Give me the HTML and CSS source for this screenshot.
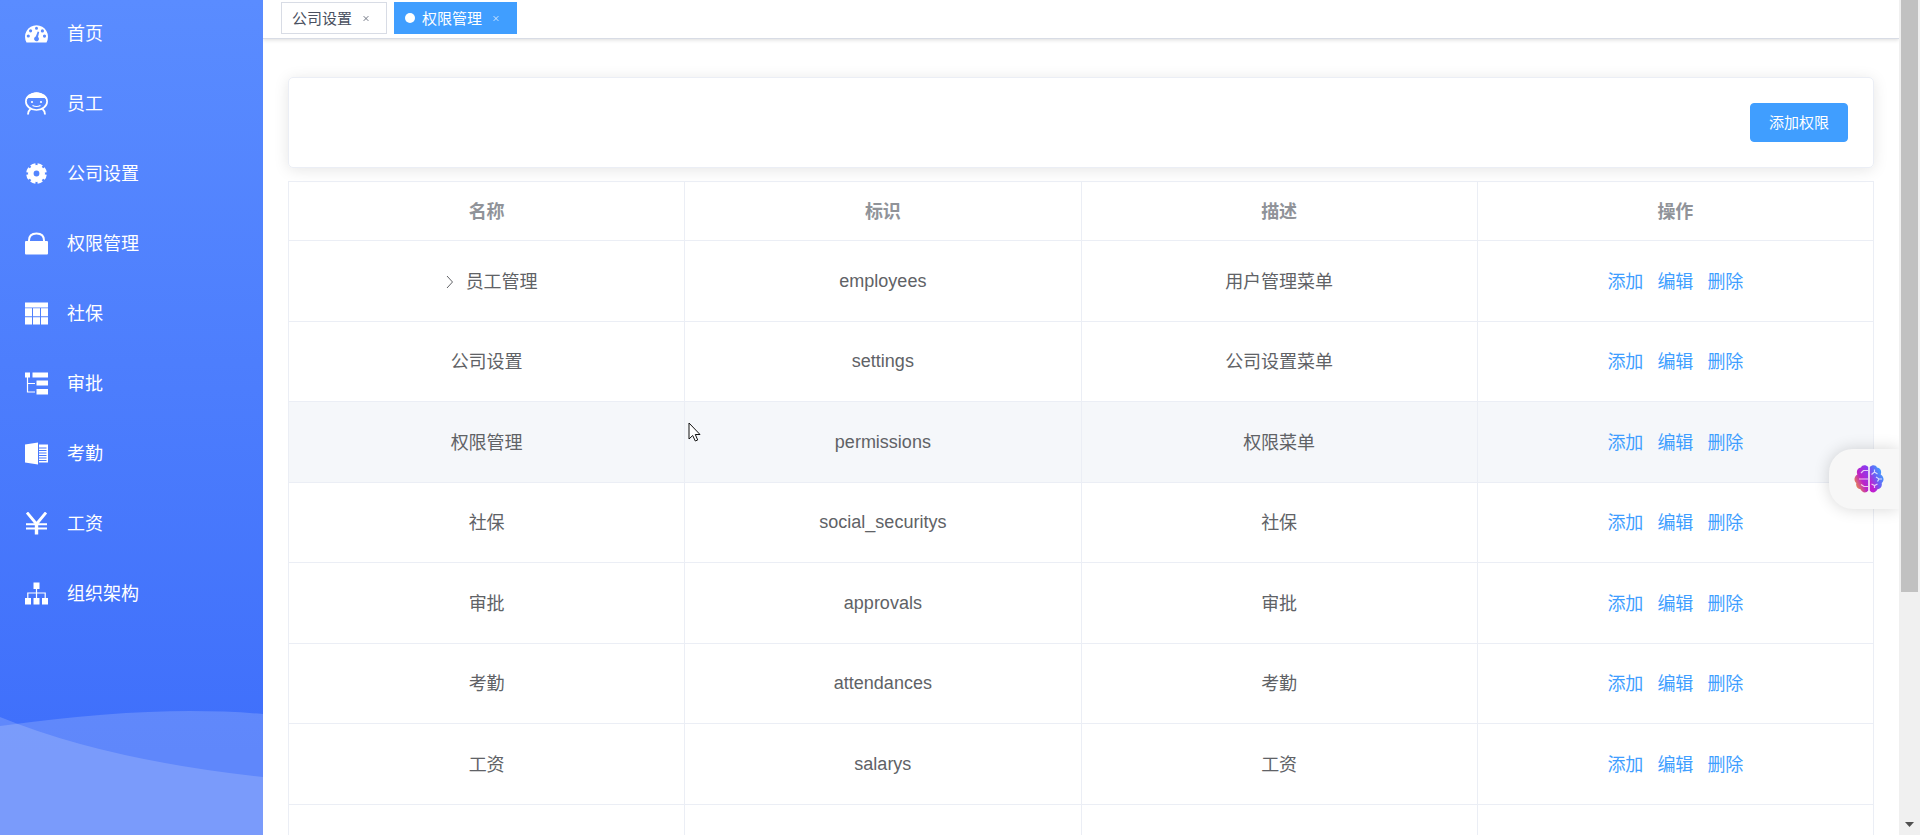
FILE: index.html
```
<!DOCTYPE html>
<html lang="zh-CN">
<head>
<meta charset="utf-8">
<title>权限管理</title>
<link rel="stylesheet" href="styles.css">
</head>
<body>
<div class="app">
  <nav class="sidebar">
    <ul class="menu">
      <li><a class="menu-item" href="#"><svg class="icon" viewBox="0 0 23 23"><path fill="currentColor" fill-rule="evenodd" d="M1.500 20.500A11.500 11.500 0 1 1 21.500 20.500ZM1.700 14a1.600 1.600 0 1 0 3.200 0a1.600 1.600 0 1 0-3.200 0ZM4 8.800a1.600 1.600 0 1 0 3.200 0a1.600 1.600 0 1 0-3.200 0ZM11.500 4.800a1.500 1.500 0 1 0 0 3a1.500 1.500 0 1 0 0-3ZM17.400 7.300a1.600 1.600 0 1 0 0 3.200a1.600 1.600 0 1 0 0-3.200ZM19.500 12.500a1.600 1.600 0 1 0 0 3.200a1.600 1.600 0 1 0 0-3.200ZM12.700 9.500 10.800 14.600a2.400 2.400 0 1 0 2.200.4L14.200 9.900Z"/></svg><span>首页</span></a></li>
      <li><a class="menu-item" href="#"><svg class="icon" viewBox="0 0 23 23"><ellipse cx="11.500" cy="9.500" rx="10.600" ry="8.500" fill="none" stroke="currentColor" stroke-width="1.700"/><path fill="currentColor" d="M1 7.500C3 2.500 7 .500 11.500 .500S20 2.500 22 7.500L19.500 6H3.500Z"/><circle cx="7" cy="10" r="1.100" fill="currentColor"/><circle cx="16" cy="10" r="1.100" fill="currentColor"/><path fill="none" stroke="currentColor" stroke-width="1.200" d="M7.500 13.500q4 2 8 0"/><path fill="none" stroke="currentColor" stroke-width="1.900" d="M5.500 17Q3 19 3 22.500M17.500 17Q20 19 20 22.500"/></svg><span>员工</span></a></li>
      <li><a class="menu-item" href="#"><svg class="icon" viewBox="0 0 23 23"><g fill="none" stroke="currentColor"><circle cx="11.500" cy="11.500" r="5.700" stroke-width="5.600"/><circle cx="11.500" cy="11.500" r="8.800" stroke-width="3" pathLength="80" stroke-dasharray="7 3" stroke-dashoffset="-1.500"/></g></svg><span>公司设置</span></a></li>
      <li><a class="menu-item" href="#"><svg class="icon" viewBox="0 0 23 23"><rect y="9" width="23" height="13.500" rx="1" fill="currentColor"/><path fill="none" stroke="currentColor" stroke-width="2" d="M4 10V8.500C4 4 7 1.500 11.500 1.500S19 4 19 8.500V10"/></svg><span>权限管理</span></a></li>
      <li><a class="menu-item" href="#"><svg class="icon" viewBox="0 0 23 23"><path fill="currentColor" d="M0 .500h23v5H0zM0 6.300h7v8H0zM8 6.300h7v8H8zM16 6.300h7v8h-7zM0 15.200h7v7.300H0zM8 15.200h7v7.300H8zM16 15.200h7v7.300h-7z"/></svg><span>社保</span></a></li>
      <li><a class="menu-item" href="#"><svg class="icon" viewBox="0 0 23 23"><path fill="currentColor" d="M0 .500h5v5H0zM7.500 .500H23v5H7.500zM11.500 8.500H23v5H11.500zM11.500 17H23v5.500H11.500z"/><path fill="none" stroke="currentColor" stroke-width="1.200" d="M2.500 5V20H10M2.500 11.500H10"/></svg><span>审批</span></a></li>
      <li><a class="menu-item" href="#"><svg class="icon" viewBox="0 0 23 23"><path fill="currentColor" d="M0 2.500 13 .500v22L0 20.500zM14 2.500h9v18h-9v-1.500h7.500v-1H14v-1.500h7.500v-1H14V14h7.500v-1H14v-1.500h7.500v-1H14V9h7.500V8H14V6.500h7.500v-1H14z"/></svg><span>考勤</span></a></li>
      <li><a class="menu-item" href="#"><svg class="icon" viewBox="0 0 23 23"><path fill="none" stroke="currentColor" stroke-width="2.800" d="M2 .500 11.500 12 21 .500"/><path fill="none" stroke="currentColor" stroke-width="3.400" d="M11.500 11V22.500"/><path fill="none" stroke="currentColor" stroke-width="2" d="M1 12.300H22M1 16.600H22"/></svg><span>工资</span></a></li>
      <li><a class="menu-item" href="#"><svg class="icon" viewBox="0 0 23 23"><path fill="currentColor" d="M8.500 .500h6v6.500h-6zM0 16h6v6.500H0zM8.500 16h6v6.500h-6zM17 16h6v6.500h-6z"/><path fill="none" stroke="currentColor" stroke-width="1.200" d="M11.500 6V16M2.800 16V11H20.200V16"/></svg><span>组织架构</span></a></li>
    </ul>
    <svg class="waves" viewBox="0 0 263 125" preserveAspectRatio="none" aria-hidden="true"><path d="M0 16Q110 1 190 1Q230 1 263 4V125H0Z" fill="#fff" fill-opacity=".17"/><path d="M0 7Q105 50 263 67V125H0Z" fill="#fff" fill-opacity=".17"/></svg>
  </nav>

  <div class="main">
    <div class="tags">
      <a class="tag" href="#"><span>公司设置</span><svg class="close" viewBox="0 0 20 20"><path d="M7.500 7.500l5 5M12.500 7.500l-5 5"/></svg></a>
      <a class="tag tag-active" href="#"><i class="dot"></i><span>权限管理</span><svg class="close" viewBox="0 0 20 20"><path d="M7.500 7.500l5 5M12.500 7.500l-5 5"/></svg></a>
    </div>
    <main class="content">
      <section class="card"><button class="btn" type="button">添加权限</button></section>
      <table class="grid">
        <thead><tr><th>名称</th><th>标识</th><th>描述</th><th>操作</th></tr></thead>
        <tbody>
          <tr><td><svg class="arrow" viewBox="0 0 12 12"><path d="M3 0l5.500 6L3 12"/></svg>员工管理</td><td class="code">employees</td><td>用户管理菜单</td><td><a class="link" href="#">添加</a><a class="link" href="#">编辑</a><a class="link" href="#">删除</a></td></tr>
          <tr><td>公司设置</td><td class="code">settings</td><td>公司设置菜单</td><td><a class="link" href="#">添加</a><a class="link" href="#">编辑</a><a class="link" href="#">删除</a></td></tr>
          <tr class="hovered"><td>权限管理</td><td class="code">permissions</td><td>权限菜单</td><td><a class="link" href="#">添加</a><a class="link" href="#">编辑</a><a class="link" href="#">删除</a></td></tr>
          <tr><td>社保</td><td class="code">social_securitys</td><td>社保</td><td><a class="link" href="#">添加</a><a class="link" href="#">编辑</a><a class="link" href="#">删除</a></td></tr>
          <tr><td>审批</td><td class="code">approvals</td><td>审批</td><td><a class="link" href="#">添加</a><a class="link" href="#">编辑</a><a class="link" href="#">删除</a></td></tr>
          <tr><td>考勤</td><td class="code">attendances</td><td>考勤</td><td><a class="link" href="#">添加</a><a class="link" href="#">编辑</a><a class="link" href="#">删除</a></td></tr>
          <tr><td>工资</td><td class="code">salarys</td><td>工资</td><td><a class="link" href="#">添加</a><a class="link" href="#">编辑</a><a class="link" href="#">删除</a></td></tr>
          <tr><td>组织架构</td><td class="code"></td><td>组织架构</td><td></td></tr>
        </tbody>
      </table>
    </main>
  </div>

  <div class="scrollbar"><div class="thumb"></div><svg class="scroll-down" viewBox="0 0 9 5"><path d="M0 0h9L4.500 5z" fill="#505050"/></svg></div>
</div>

<button class="assistant" type="button" aria-label="助手">
  <svg class="brain" viewBox="0 0 30 28">
    <defs>
      <linearGradient id="left" x1="1" y1="0" x2="0" y2="1"><stop offset=".1" stop-color="#8a3cf0"/><stop offset=".5" stop-color="#bd22c8"/><stop offset=".9" stop-color="#f09a38"/></linearGradient>
      <linearGradient id="right" x1="1" y1="0" x2="0" y2="1"><stop offset=".1" stop-color="#38b0ff"/><stop offset=".5" stop-color="#6a60f5"/><stop offset=".8" stop-color="#c01fd0"/></linearGradient>
    </defs>
    <path fill="url(#left)" d="M14.200 2C12-.500 8-.300 7 2.500 3.500 3 2 6 3.300 9.500-.300 12-.300 16 2.300 18 1.500 21.500 3.500 24 6.500 24.300 8 28 12.500 28.500 14.200 25.500Z"/>
    <path fill="url(#right)" d="M15.800 2C18-.500 22-.300 23 2.500 26.500 3 28 6 26.700 9.500 30.300 12 30.300 16 27.700 18 28.500 21.500 26.500 24 23.500 24.300 22 28 17.500 28.500 15.800 25.500Z"/>
    <path fill="none" stroke="#fff" stroke-opacity=".75" stroke-width="1.200" d="M14 5.500H9.500L7 8M14 14H5M14 21.500H10L7 19.500M17.500 9.500l3-2.500 3 2M20.500 4.500V7M22 12l3 2h3M25 14l-1.500 2.500M17.500 19l3 1.500L23.500 19M20.500 20.500V23"/>
  </svg>
</button>
<svg class="cursor" viewBox="0 0 13 20" aria-hidden="true"><path d="M1 1V17L4.700 13.500 7.300 19 9.700 18 7.300 12.500H12Z" fill="#fff" stroke="#111" stroke-width="1"/></svg>
</body>
</html>
```
FILE: styles.css
```
* { box-sizing: border-box; }

body {
  margin: 0;
  height: 100vh;
  overflow: hidden;
  background: #fff;
  color: #606266;
  font-family: "Liberation Sans", "Noto Sans CJK SC", sans-serif;
  font-size: 18px;
}

a { text-decoration: none; }

.app { display: flex; height: 100%; }

.sidebar {
  display: flex;
  flex-direction: column;
  justify-content: space-between;
  flex: 0 0 263px;
  background: linear-gradient(#5a8cff, #3f6ffb 90%);
}

.menu {
  display: flex;
  flex-direction: column;
  gap: 20px;
  margin: 0;
  padding: 8px 0 0;
  list-style: none;
}

.menu-item {
  display: flex;
  align-items: center;
  gap: 19px;
  height: 50px;
  padding-left: 25px;
  color: #fff;
}

.menu-item span,
.tag span { padding-bottom: 2px; }

.icon { width: 23px; height: 23px; }

.waves { display: block; width: 100%; height: 125px; }

.main {
  flex: 1;
  min-width: 0;
  overflow: hidden;
}

.tags {
  display: flex;
  gap: 7px;
  height: 39px;
  padding: 2px 18px 0;
  border-bottom: 1px solid #d8dce5;
  box-shadow: 0 1px 4px rgba(0, 0, 0, .14);
}

.tag {
  display: flex;
  align-items: center;
  height: 32px;
  padding: 0 10px;
  border: 1px solid #d8dce5;
  color: #495060;
  font-size: 15px;
}

.tag-active {
  border-color: #409eff;
  background: #409eff;
  color: #fff;
}

.dot {
  width: 10px;
  height: 10px;
  margin-right: 7px;
  border-radius: 50%;
  background: #fff;
}

.close {
  width: 20px;
  height: 20px;
  margin-left: 4px;
  padding-top: 1px;
  fill: none;
  stroke: currentColor;
  stroke-width: 1;
  opacity: .8;
}

.content { padding: 38px 25px 0; }

.card {
  display: flex;
  justify-content: flex-end;
  margin-bottom: 13px;
  padding: 25px;
  border: 1px solid #ebeef5;
  border-radius: 5px;
  box-shadow: 0 2px 15px rgba(0, 0, 0, .1);
}

.btn {
  height: 39px;
  padding: 0 18px 2px;
  border: 1px solid #409eff;
  border-radius: 4px;
  background: #409eff;
  color: #fff;
  font: 15px "Liberation Sans", "Noto Sans CJK SC", sans-serif;
}

.grid {
  width: 100%;
  table-layout: fixed;
  border-collapse: collapse;
}

.grid th,
.grid td {
  height: 81px;
  padding: 0 0 3px;
  border: 1px solid #ebeef5;
  text-align: center;
}

.grid th {
  height: 59px;
  color: #909399;
  font-weight: 700;
}

.grid tr:nth-child(even) td { height: 80px; }

.grid .code { padding: 0; }

.hovered { background: #f5f7fa; }

.arrow {
  width: 12px;
  height: 12px;
  margin: 0 10px 0 8px;
  fill: none;
  stroke: #606266;
  stroke-width: 1;
}

.link { color: #409eff; }
.link + .link { margin-left: 14px; }

.scrollbar {
  display: flex;
  flex-direction: column;
  justify-content: space-between;
  align-items: center;
  flex: 0 0 21px;
  padding-bottom: 8px;
  background: #f0f0f0;
}

.thumb { width: 17px; height: 592px; background: #c1c1c1; }

.scroll-down { width: 9px; height: 5px; }

.assistant {
  position: fixed;
  top: 449px;
  right: 21px;
  display: flex;
  align-items: center;
  width: 70px;
  height: 60px;
  padding: 0 0 0 25px;
  border: 0;
  border-radius: 24px 0 0 24px;
  background: #f7f7f7;
  box-shadow: 0 0 16px rgba(0, 0, 0, .16);
  clip-path: inset(-20px 0 -20px -20px);
}

.brain { width: 30px; height: 28px; }

.cursor {
  position: fixed;
  top: 422px;
  left: 688px;
  width: 13px;
  height: 20px;
}
```
